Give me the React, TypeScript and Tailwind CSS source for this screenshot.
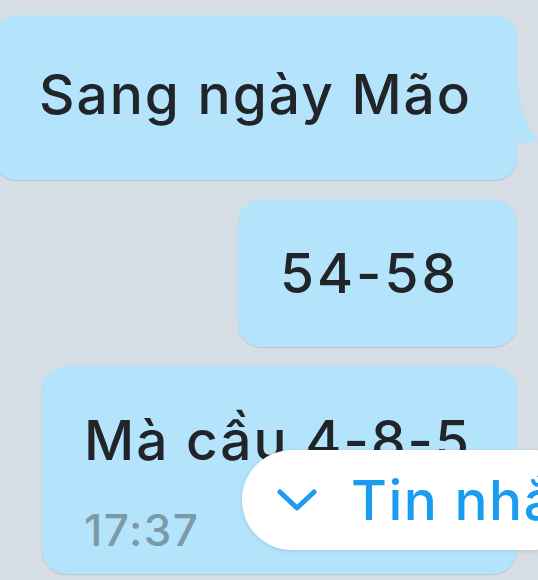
import React from "react";

export default function App() {
  return (
    <div
      className="w-[538px] h-[580px] overflow-hidden bg-[#d6dde4] relative"
      style={{ fontFamily: "Inter, 'Noto Sans', sans-serif" }}
    >
      <div className="flex flex-col items-end pt-[15px] pr-[21px] gap-[19px]">
        {/* Bubble 1 */}
        <div className="relative w-[523px] h-[165px] rounded-[22px] bg-[#b3e4fb] shadow-[0_1px_1px_rgba(0,0,0,0.12)] flex items-center pl-[45px] pb-[6px]">
          <span className="text-[55px] leading-none font-medium text-[#212529] tracking-[2px]">Sang ngày Mão</span>
          <svg
            className="absolute left-[100%] top-[45px]"
            width="24"
            height="90"
            viewBox="0 0 24 90"
          >
            <path
              d="M-2 0 L0 0 C0 40 8 70 22 80 C14 83 6 83 -2 83 Z"
              fill="#b3e4fb"
            />
          </svg>
        </div>
        {/* Bubble 2 */}
        <div className="w-[279px] h-[148px] rounded-[24px] bg-[#b3e4fb] shadow-[0_1px_1px_rgba(0,0,0,0.12)] flex items-center pl-[42px]">
          <span className="text-[55px] leading-none font-medium text-[#212529] tracking-[3px]">54-58</span>
        </div>
        {/* Bubble 3 */}
        <div className="w-[475px] h-[208px] rounded-[24px] bg-[#b3e4fb] shadow-[0_1px_1px_rgba(0,0,0,0.12)] flex flex-col pl-[42px] pt-[47px]">
          <span className="text-[55px] leading-none font-medium text-[#212529] tracking-[2px]">Mà cầu 4-8-5</span>
          <span className="mt-[40px] text-[44px] leading-none font-medium text-[#7d98a7] tracking-[1.5px]">17:37</span>
        </div>
      </div>
      {/* Floating pill */}
      <div className="absolute left-[242px] top-[450px] w-[340px] h-[100px] rounded-full bg-white shadow-[0_1px_4px_rgba(0,0,0,0.12)] flex items-center pl-[34px]">
        <svg width="42" height="24" viewBox="0 0 42 24" className="shrink-0">
          <path
            d="M4 4 L21 20 L38 4"
            fill="none"
            stroke="#1a9df0"
            strokeWidth="5"
            strokeLinecap="round"
            strokeLinejoin="round"
          />
        </svg>
        <span className="ml-[33px] text-[55px] leading-none text-[#1a9df0] whitespace-nowrap font-medium tracking-[1.5px]">
          Tin nhắn mới
        </span>
      </div>
    </div>
  );
}
